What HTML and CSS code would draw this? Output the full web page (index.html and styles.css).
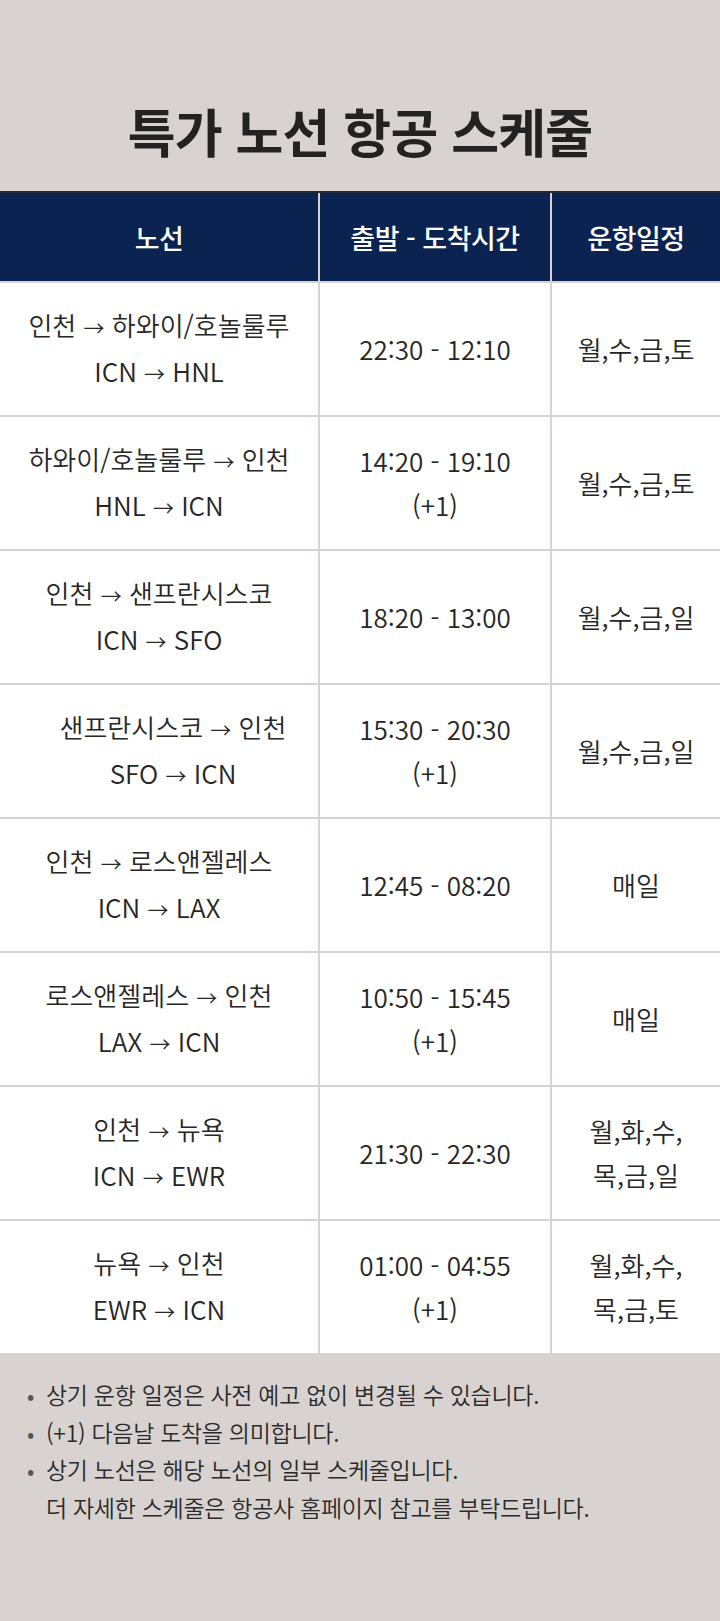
FILE: index.html
```html
<!DOCTYPE html>
<html lang="ko">
<head>
<meta charset="utf-8">
<title>특가 노선 항공 스케줄</title>
<link rel="stylesheet" href="styles.css">
</head>
<body>
<div class="page">
  <header class="hero">
    <h1 class="title">특가 노선 항공 스케줄</h1>
  </header>
  <section class="table">
    <div class="th">노선</div>
    <div class="th">출발 - 도착시간</div>
    <div class="th">운항일정</div>

    <div class="td"><p class="tx">인천 <span class="arr">→</span> 하와이/호놀룰루<br>ICN <span class="arr">→</span> HNL</p></div>
    <div class="td"><p class="tx">22:30 - 12:10</p></div>
    <div class="td"><p class="tx">월,수,금,토</p></div>

    <div class="td"><p class="tx">하와이/호놀룰루 <span class="arr">→</span> 인천<br>HNL <span class="arr">→</span> ICN</p></div>
    <div class="td"><p class="tx">14:20 - 19:10<br>(+1)</p></div>
    <div class="td"><p class="tx">월,수,금,토</p></div>

    <div class="td"><p class="tx">인천 <span class="arr">→</span> 샌프란시스코<br>ICN <span class="arr">→</span> SFO</p></div>
    <div class="td"><p class="tx">18:20 - 13:00</p></div>
    <div class="td"><p class="tx">월,수,금,일</p></div>

    <div class="td td-shift"><p class="tx">샌프란시스코 <span class="arr">→</span> 인천<br>SFO <span class="arr">→</span> ICN</p></div>
    <div class="td"><p class="tx">15:30 - 20:30<br>(+1)</p></div>
    <div class="td"><p class="tx">월,수,금,일</p></div>

    <div class="td"><p class="tx">인천 <span class="arr">→</span> 로스앤젤레스<br>ICN <span class="arr">→</span> LAX</p></div>
    <div class="td"><p class="tx">12:45 - 08:20</p></div>
    <div class="td"><p class="tx">매일</p></div>

    <div class="td"><p class="tx">로스앤젤레스 <span class="arr">→</span> 인천<br>LAX <span class="arr">→</span> ICN</p></div>
    <div class="td"><p class="tx">10:50 - 15:45<br>(+1)</p></div>
    <div class="td"><p class="tx">매일</p></div>

    <div class="td"><p class="tx">인천 <span class="arr">→</span> 뉴욕<br>ICN <span class="arr">→</span> EWR</p></div>
    <div class="td"><p class="tx">21:30 - 22:30</p></div>
    <div class="td"><p class="tx">월,화,수,<br>목,금,일</p></div>

    <div class="td"><p class="tx">뉴욕 <span class="arr">→</span> 인천<br>EWR <span class="arr">→</span> ICN</p></div>
    <div class="td"><p class="tx">01:00 - 04:55<br>(+1)</p></div>
    <div class="td"><p class="tx">월,화,수,<br>목,금,토</p></div>
  </section>
  <footer class="notes">
    <div class="note"><span class="dot">•</span><span class="txt">상기 운항 일정은 사전 예고 없이 변경될 수 있습니다.</span></div>
    <div class="note"><span class="dot">•</span><span class="txt">(+1) 다음날 도착을 의미합니다.</span></div>
    <div class="note"><span class="dot">•</span><span class="txt">상기 노선은 해당 노선의 일부 스케줄입니다.<br>더 자세한 스케줄은 항공사 홈페이지 참고를 부탁드립니다.</span></div>
  </footer>
</div>
</body>
</html>
```

FILE: styles.css
```css
* { box-sizing: border-box; }
html, body {
  margin: 0;
  padding: 0;
  background: #d8d3d0;
}
body {
  font-family: "Noto Sans CJK KR", "Noto Sans", sans-serif;
  color: #2b2b2b;
}
.page {
  width: 720px;
  min-height: 1621px;
  background: #d8d3d0;
}
.hero {
  padding: 101px 0 30px;
  text-align: center;
}
.title {
  margin: 0;
  font-size: 52px;
  line-height: 60px;
  font-weight: 700;
  color: #222;
  letter-spacing: -0.8px;
}
.table {
  display: grid;
  grid-template-columns: 318px 230px 168px;
  grid-auto-rows: 132px;
  grid-template-rows: 88px;
  column-gap: 2px;
  row-gap: 2px;
  background: #d8d3d0;
  border-top: 2px solid #222a36;
}
.th {
  background: #0b2350;
  color: #fff;
  font-size: 27px;
  font-weight: 500;
  display: flex;
  align-items: center;
  justify-content: center;
  letter-spacing: -0.5px;
}
.td {
  background: #fff;
  display: flex;
  align-items: center;
  justify-content: center;
}
.td-shift {
  padding-left: 28px;
}
.tx {
  margin: 0;
  font-size: 26px;
  font-weight: 350;
  line-height: 44px;
  text-align: center;
  color: #262626;
}
.arr {
  font-size: 21px;
}
.notes {
  padding: 23px 0 0 27px;
}
.note {
  display: flex;
  font-size: 23px;
  font-weight: 350;
  line-height: 37.5px;
  color: #2a2a2a;
  letter-spacing: -0.3px;
}
.dot {
  width: 19px;
  flex: none;
  font-size: 22px;
  color: #555;
}
```
